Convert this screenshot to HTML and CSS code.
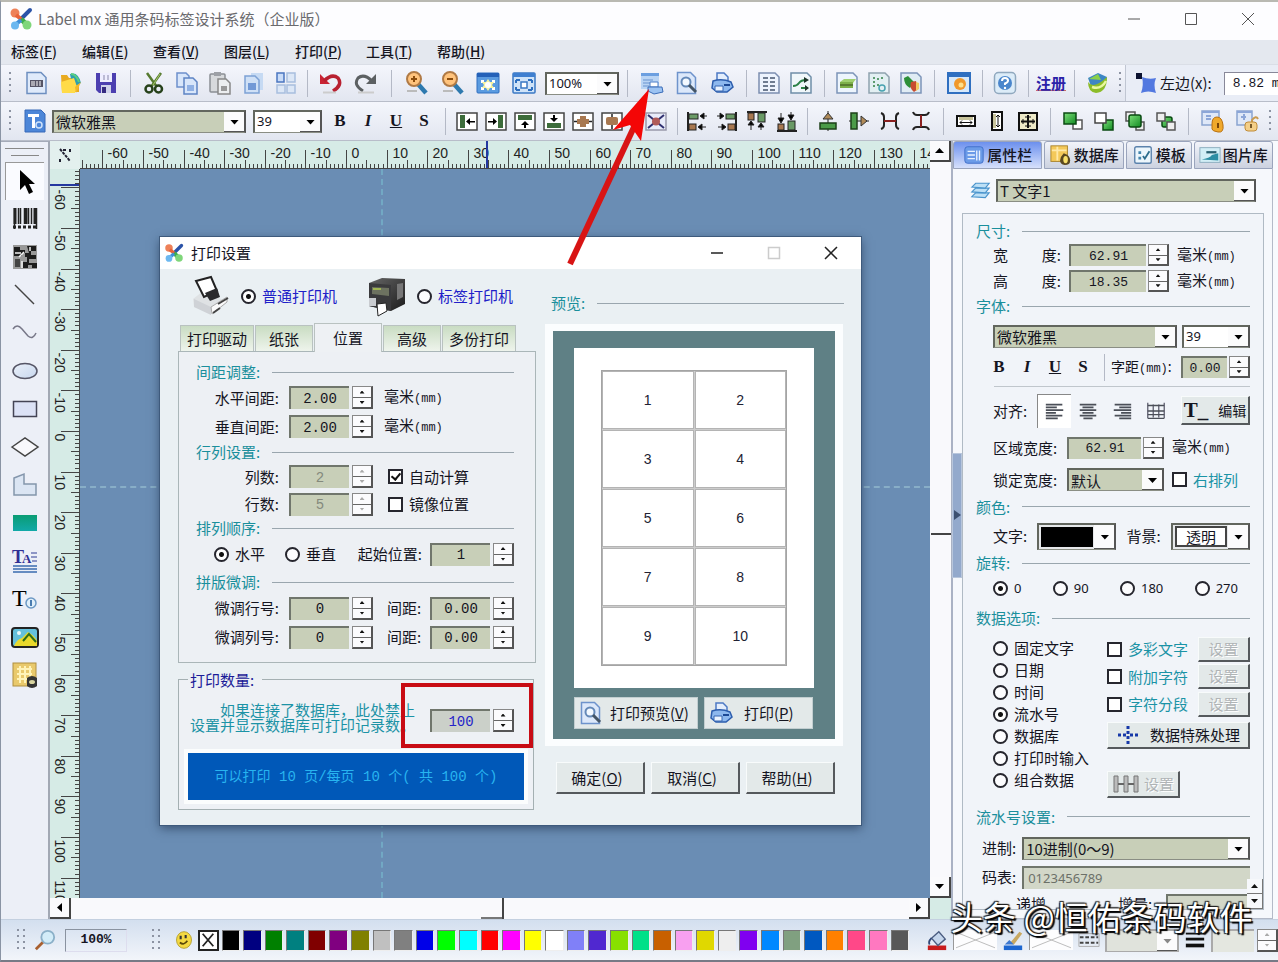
FILE: index.html
```html
<!DOCTYPE html>
<html lang="zh-CN">
<head>
<meta charset="utf-8">
<title>Label mx</title>
<link rel="stylesheet" href="styles.css">
</head>
<body>
<svg class="sprite" aria-hidden="true">
  <defs>
    <linearGradient id="g-blue" x1="0" y1="0" x2="1" y2="1"><stop offset="0" stop-color="#eaf4ff"/><stop offset="1" stop-color="#8fb2e0"/></linearGradient>
    <linearGradient id="g-green" x1="0" y1="0" x2="1" y2="1"><stop offset="0" stop-color="#7ee07a"/><stop offset="1" stop-color="#118a22"/></linearGradient>
    <linearGradient id="g-dark" x1="0" y1="0" x2="1" y2="1"><stop offset="0" stop-color="#666"/><stop offset="1" stop-color="#1c1c1c"/></linearGradient>
    <linearGradient id="g-teal" x1="0" y1="0" x2="0" y2="1"><stop offset="0" stop-color="#0a9c74"/><stop offset="1" stop-color="#12a9a8"/></linearGradient>
  </defs>
  <symbol id="i-logo" viewBox="0 0 24 24"><path d="M21 3 12 12" stroke="#2b53a8" stroke-width="4" stroke-linecap="round"/><path d="M12 12 18 18" stroke="#3fae4c" stroke-width="5"/><circle cx="6" cy="6" r="4.500" fill="#ee8158"/><path d="m7 8 5 4" stroke="#e8633a" stroke-width="4"/><circle cx="18" cy="18" r="4.500" fill="#7fd67a"/><path d="m12 13-6 5" stroke="#3f8fd8" stroke-width="4"/><circle cx="6" cy="18.500" r="4" fill="#6cb8f0"/></symbol>
  <symbol id="i-new" viewBox="0 0 24 24"><path d="M3 1.500h14l5 5V22.500H3z" fill="#dfeafa" stroke="#6d8fc0" stroke-width="1.500"/><rect x="6" y="9" width="13" height="7" fill="#556"/><path d="M8 10v5M10 10v5M13 10v5M16 10v5" stroke="#fff"/></symbol>
  <symbol id="i-open" viewBox="0 0 24 24"><path d="M2 4h6l2 3h10v14H3z" fill="#e9ab20"/><path d="M11 3q8-3 11 9l-6 3-4-7z" fill="#2d9fb0"/><path d="M12 3q5 0 8 8" stroke="#5bd07e" stroke-width="2" fill="none"/><path d="m2 11 13-4 3 9-2 6H3z" fill="#ffdb48"/><path d="m16 16 6-5-5 11z" fill="#f0b92a"/></symbol>
  <symbol id="i-save" viewBox="0 0 24 24"><path d="M2 2h20v20H5l-3-3z" fill="#4c3fb0"/><rect x="6" y="2" width="12" height="9" fill="#eef"/><path d="M10 4v5M14 4v5" stroke="#88a"/><rect x="7" y="14" width="10" height="8" fill="#cfd2ea"/><rect x="8" y="16" width="4" height="6" fill="#352a80"/></symbol>
  <symbol id="i-cut" viewBox="0 0 24 24"><path d="m5 2 10 14M19 2 9 16" stroke="#567a30" stroke-width="2.500"/><path d="m18 3-7 11" stroke="#a7c96a"/><circle cx="7" cy="18" r="3.500" fill="none" stroke="#26411a" stroke-width="2.500"/><circle cx="16.500" cy="18" r="3.500" fill="none" stroke="#26411a" stroke-width="2.500"/></symbol>
  <symbol id="i-copy" viewBox="0 0 24 24"><path d="M2 2h9l3 3v11H2z" fill="#d8e6fa" stroke="#6d90cc" stroke-width="1.500"/><path d="M9 7h9l4 4v12H9z" fill="#d8e6fa" stroke="#5e84c4" stroke-width="1.500"/><rect x="12" y="14" width="7" height="6" fill="#8fb0e4"/></symbol>
  <symbol id="i-paste" viewBox="0 0 24 24"><rect x="2" y="3" width="15" height="18" rx="1" fill="#d7d9dc" stroke="#8b8e94" stroke-width="1.500"/><rect x="6" y="1" width="7" height="4" fill="#9da0a6"/><path d="M10 8h8l4 4v11H10z" fill="#eceef0" stroke="#888" stroke-width="1.500"/><rect x="13" y="15" width="6" height="5" fill="#999"/></symbol>
  <symbol id="i-dup" viewBox="0 0 24 24"><rect x="10" y="2" width="12" height="17" fill="#c6daf3"/><path d="M4 5h10l4 4v13H4z" fill="#cfe0f6" stroke="#7da1d5" stroke-width="1.500"/><path d="M7 19v-7h8v7z" fill="#7299d6"/></symbol>
  <symbol id="i-grid" viewBox="0 0 24 24"><g fill="#dce7f6" stroke="#a8bede" stroke-width="1.500"><rect x="13" y="2" width="8" height="9"/><rect x="3" y="14" width="8" height="8"/><rect x="13" y="14" width="8" height="8"/></g><rect x="3" y="2" width="7" height="9" fill="#c9dcf8" stroke="#4a76c0" stroke-width="1.500"/></symbol>
  <symbol id="i-undo" viewBox="0 0 24 24"><path d="M2 3v10h10z" fill="#c92434"/><path d="M6 10q8-8 14-3 5 7-5 13" fill="none" stroke="#b82030" stroke-width="3.500"/><path d="M5 21.500h13" stroke="#ccc" stroke-width="2"/></symbol>
  <symbol id="i-redo" viewBox="0 0 24 24"><path d="M22 3v10H12z" fill="#5c6062"/><path d="M18 10Q10 2 4 7q-5 7 5 13" fill="none" stroke="#5c6062" stroke-width="3"/><path d="M4 21.500h16" stroke="#ccc" stroke-width="2"/></symbol>
  <symbol id="i-zin" viewBox="0 0 24 24"><path d="m14 13 8 9" stroke="#2d79ae" stroke-width="4.500"/><circle cx="10" cy="8" r="7" fill="#ffc37c" stroke="#b07a45" stroke-width="2"/><path d="M7 8h6M10 5v6" stroke="#8b4c0c" stroke-width="2"/><path d="M3 20h10" stroke="#bbb" stroke-width="2"/></symbol>
  <symbol id="i-zout" viewBox="0 0 24 24"><path d="m14 13 8 9" stroke="#2d79ae" stroke-width="4.500"/><circle cx="10" cy="8" r="7" fill="#ffc37c" stroke="#b07a45" stroke-width="2"/><path d="M7 8h6" stroke="#8b4c0c" stroke-width="2"/><path d="M3 20h10" stroke="#bbb" stroke-width="2"/></symbol>
  <symbol id="i-fit" viewBox="0 0 24 24"><rect x="1" y="2" width="22" height="20" rx="1" fill="#5a9be0" stroke="#2e6fc0"/><path d="M1 2h22v4H1z" fill="#2461b8"/><path d="M5 9h3v3H5zM16 9h3v3h-3zM5 16h3v3H5zM16 16h3v3h-3z" fill="#fff"/><path d="m12 8 2 3h4l-2 3 2 3h-4l-2 3-2-3H6l2-3-2-3h4z" fill="#f6f3a0"/><circle cx="12" cy="14" r="3" fill="#fff"/></symbol>
  <symbol id="i-full" viewBox="0 0 24 24"><rect x="1" y="2" width="22" height="20" rx="1" fill="#cfe3f8" stroke="#3a78c4" stroke-width="1.500"/><path d="M1 2h22v4H1z" fill="#3f7fd0"/><rect x="9" y="11" width="6" height="6" fill="#fff" stroke="#3a78c4" stroke-width="1.500"/><path d="M4 9h4M4 9v3M20 9h-4M20 9v3M4 19h4M4 19v-3M20 19h-4M20 19v-3" stroke="#2d6fc0" stroke-width="2"/></symbol>
  <symbol id="i-pset" viewBox="0 0 24 24"><path d="M1 2h18v16H1z" fill="#b9d4f4"/><path d="M1 2h18v3H1z" fill="#6c9fe0"/><path d="M3 9h10M3 12h7M3 15h6" stroke="#6893cf"/><path d="M10 11h8v5h-8z" fill="#fff" stroke="#4c7ec8"/><path d="M8 16h14l1 5-9 2-6-3z" fill="#9cc3f2" stroke="#3a6cb8"/></symbol>
  <symbol id="i-prev" viewBox="0 0 24 24"><path d="M2.500 1.500h13l5 5v16h-18z" fill="#dce8fa" stroke="#6e93cc" stroke-width="1.500"/><circle cx="11" cy="11" r="4.500" fill="#f3f9ff" stroke="#6489b8" stroke-width="2"/><path d="m14 14 7 7" stroke="#456" stroke-width="3"/></symbol>
  <symbol id="i-print" viewBox="0 0 24 24"><path d="M7 2h7l4 4v6H7z" fill="#e4eefc" stroke="#4d7ac4" stroke-width="1.500"/><path d="M3 10q9-3 18 1l2 5-6 5H7l-5-4z" fill="#8db8ee" stroke="#2c5dad" stroke-width="1.500"/><path d="M5 15h8v5H5z" fill="#eaf3ff" stroke="#3767b2"/><path d="M14 14h6" stroke="#1c4894" stroke-width="2"/></symbol>
  <symbol id="i-list" viewBox="0 0 24 24"><path d="M2 2h16l4 4v16H2z" fill="#edf3fd" stroke="#7c8eb0" stroke-width="1.500"/><path d="M6 7h5M13 7h5M6 11h5M13 11h5M6 15h5M13 15h5M6 19h5M13 19h5" stroke="#46566e" stroke-width="1.500"/></symbol>
  <symbol id="i-flow" viewBox="0 0 24 24"><path d="M2 2h16l4 4v16H2z" fill="#f0f7fa" stroke="#6f8ea8" stroke-width="1.500"/><path d="M4 15q4 0 6-3t7-3M12 17h5" stroke="#2b8246" stroke-width="2" fill="none"/><path d="m15 6 5 3-5 3zM16 14l4 3-4 3z" fill="#1d3428"/></symbol>
  <symbol id="i-doc1" viewBox="0 0 24 24"><path d="M2 2h16l4 4v16H2z" fill="#edf5fd" stroke="#7c94b8" stroke-width="1.500"/><path d="m5 11 4-3h12l-3 4z" fill="#9fd070"/><path d="M5 11h13v6H5z" fill="#7db04a"/><path d="M5 14h13" stroke="#4d6d28" stroke-width="1.500"/></symbol>
  <symbol id="i-doc2" viewBox="0 0 24 24"><path d="M2 2h16l4 4v16H2z" fill="#e2eff2" stroke="#8fa2ae" stroke-width="1.500"/><circle cx="15" cy="17" r="3" fill="none" stroke="#48a2b0" stroke-width="1.500"/><path d="M7 6v12M11 7v2M15 6v4M11 13v3" stroke="#5c9c70" stroke-width="2" stroke-dasharray="2 2"/></symbol>
  <symbol id="i-doc3" viewBox="0 0 24 24"><path d="M2 2h16l4 4v16H2z" fill="#e0ecf4" stroke="#7c94b8" stroke-width="1.500"/><path d="m5 7 4-2 6 6-4 6q-6-3-6-10" fill="#2c8f38"/><path d="m12 11 5-1 2 8-4 3q-5-4-3-10" fill="#c84c30"/><path d="m17 11 3 1v6l-3 2z" fill="#f0cb64"/></symbol>
  <symbol id="i-img" viewBox="0 0 24 24"><rect x="1" y="2" width="22" height="20" fill="#d6e8fa" stroke="#2f6fc0" stroke-width="2"/><path d="M1 2h22v4H1z" fill="#2f6fc0"/><circle cx="13" cy="13" r="6" fill="#f0992c"/><circle cx="14" cy="14" r="2.500" fill="#ffe08a"/></symbol>
  <symbol id="i-help" viewBox="0 0 24 24"><rect x="1.500" y="1.500" width="21" height="21" rx="4" fill="#dcecf8" stroke="#90a8be" stroke-width="1.500"/><circle cx="12" cy="12" r="7" fill="#4a86cc"/><path d="M9 10q0-3 3-3t3 2.500q0 2-3 3v1.500" stroke="#fff" stroke-width="2" fill="none"/><circle cx="12" cy="17" r="1.200" fill="#fff"/></symbol>
  <symbol id="i-site" viewBox="0 0 24 24"><path d="m3 7 10-5 9 4-3 12H7z" fill="#3d86c4"/><path d="m4 8 9-5 3 6" fill="#8ad04a"/><path d="M3 11q5 8 19-5 0 15-11 16-8-1-8-11" fill="#8cbc28"/><path d="M7 16q9 3 14-6" stroke="#e9f7a0" stroke-width="2.500" fill="none"/></symbol>
  <symbol id="i-pos" viewBox="0 0 24 24"><path d="M8 6q7 3 14 1-3 7 0 15-8-3-15 0 3-8 1-16" fill="#5278e0"/><rect x="2" y="2" width="6" height="6" fill="#0c1230"/></symbol>
  <symbol id="i-tfont" viewBox="0 0 24 24"><path d="M2 1h16l4 4v18H2z" fill="#4c86d8" stroke="#3668b8"/><path d="M5 5h11v3h-4v11H9V8H5z" fill="#fff"/><circle cx="16" cy="16" r="3" fill="none" stroke="#cfe2fa" stroke-width="1.500"/></symbol>

  <symbol id="i-al" viewBox="0 0 24 24"><rect x="2" y="4" width="20" height="17" fill="#fff" stroke="#444" stroke-width="1.500"/><rect x="5" y="6" width="5" height="13" fill="#3c6c3a"/><path d="M11 12.500 15 9v7zM15 12h5v1.500h-5z"/></symbol>
  <symbol id="i-ar" viewBox="0 0 24 24"><rect x="2" y="4" width="20" height="17" fill="#fff" stroke="#444" stroke-width="1.500"/><rect x="14" y="6" width="5" height="13" fill="#3c6c3a"/><path d="M13 12.500 9 9v7zM4 12h5v1.500H4z"/></symbol>
  <symbol id="i-at" viewBox="0 0 24 24"><rect x="2" y="4" width="20" height="17" fill="#fff" stroke="#444" stroke-width="1.500"/><rect x="5" y="6" width="14" height="5" fill="#3c6c3a"/><path d="M12 12 8 16h8zM11 16h2v3h-2z"/></symbol>
  <symbol id="i-ab" viewBox="0 0 24 24"><rect x="2" y="4" width="20" height="17" fill="#fff" stroke="#444" stroke-width="1.500"/><rect x="5" y="14" width="14" height="5" fill="#3c6c3a"/><path d="m12 13-4-4h8zM11 6h2v3h-2z"/></symbol>
  <symbol id="i-ah" viewBox="0 0 24 24"><rect x="2" y="4" width="20" height="17" fill="#fff" stroke="#444" stroke-width="1.500"/><path d="M3 12.500h18" stroke="#222" stroke-width="1.500"/><path d="M6 10h3V7h6v3h3v5h-3v3H9v-3H6z" fill="#a87850"/></symbol>
  <symbol id="i-av" viewBox="0 0 24 24"><rect x="2" y="4" width="20" height="17" fill="#fff" stroke="#444" stroke-width="1.500"/><path d="M12 5v15" stroke="#222" stroke-width="1.500"/><rect x="6" y="8" width="12" height="8" rx="2" fill="#a87850"/></symbol>
  <symbol id="i-ac" viewBox="0 0 24 24"><rect x="2" y="4" width="20" height="17" fill="#e9ecfa" stroke="#99a" stroke-width="1.500"/><path d="m4 6 16 13M20 6 4 19" stroke="#303070" stroke-width="2"/><circle cx="12" cy="12.500" r="4" fill="#b05a58"/></symbol>
  <symbol id="i-dl" viewBox="0 0 24 24"><path d="M3 3v19" stroke="#222" stroke-width="2"/><rect x="4" y="5" width="9" height="5" fill="#6a9a66" stroke="#222"/><rect x="4" y="15" width="7" height="6" fill="#a87850" stroke="#222"/><path d="m15 7 4-3v6zM19 7h3M13 18l4-3v6zM17 18h4" stroke="#222"/></symbol>
  <symbol id="i-dr" viewBox="0 0 24 24"><path d="M21 3v19" stroke="#222" stroke-width="2"/><rect x="11" y="5" width="9" height="5" fill="#6a9a66" stroke="#222"/><rect x="13" y="15" width="7" height="6" fill="#a87850" stroke="#222"/><path d="M9 7 5 4v6zM5 7H2M11 18l-4-3v6zM7 18H3" stroke="#222"/></symbol>
  <symbol id="i-dt" viewBox="0 0 24 24"><path d="M2 3h20" stroke="#222" stroke-width="2"/><rect x="3" y="4" width="6" height="7" fill="#a87850" stroke="#222"/><rect x="13" y="4" width="7" height="9" fill="#6a9a66" stroke="#222"/><path d="m6 12-3 4h6zM6 16v5M16 14l-3 4h6zM16 17v4" stroke="#222"/></symbol>
  <symbol id="i-db" viewBox="0 0 24 24"><path d="M2 22h20" stroke="#222" stroke-width="2"/><rect x="3" y="15" width="6" height="6" fill="#a87850" stroke="#222"/><rect x="13" y="12" width="7" height="9" fill="#6a9a66" stroke="#222"/><path d="M6 14 3 9h6zM6 9V4M16 11l-3-5h6zM16 6V3" stroke="#222"/></symbol>
  <symbol id="i-ch" viewBox="0 0 24 24"><path d="M12 2v20" stroke="#222"/><path d="m12 4-5 6h10z" fill="#b08a58" stroke="#333"/><rect x="4" y="14" width="16" height="6" fill="#4b9b48" stroke="#1d4018" stroke-width="1.500"/></symbol>
  <symbol id="i-cv" viewBox="0 0 24 24"><path d="M2 12h20" stroke="#222"/><path d="m20 12-6-5v10z" fill="#b08a58" stroke="#333"/><rect x="4" y="4" width="6" height="16" fill="#4b9b48" stroke="#1d4018" stroke-width="1.500"/></symbol>
  <symbol id="i-sh" viewBox="0 0 24 24"><path d="M3 4q3 1 3 4v8q0 3-3 4M21 4q-3 1-3 4v8q0 3 3 4" stroke="#222" stroke-width="2" fill="none"/><path d="M6 12h12" stroke="#8a2020" stroke-width="2"/></symbol>
  <symbol id="i-sv" viewBox="0 0 24 24"><path d="M4 3q1 3 4 3h8q3 0 4-3M4 21q1-3 4-3h8q3 0 4 3" stroke="#222" stroke-width="2" fill="none"/><path d="M12 6v12" stroke="#8a2020" stroke-width="2"/></symbol>
  <symbol id="i-ww" viewBox="0 0 24 24"><rect x="3" y="7" width="18" height="10" fill="#fff" stroke="#111" stroke-width="2"/><rect x="5" y="8" width="14" height="3" fill="#c8c49c"/><path d="M6 13.500h12M8 11.500l-2 2 2 2M16 11.500l2 2-2 2" stroke="#111" fill="none"/></symbol>
  <symbol id="i-hh" viewBox="0 0 24 24"><rect x="7" y="3" width="10" height="18" fill="#fff" stroke="#111" stroke-width="2"/><rect x="8" y="5" width="3" height="14" fill="#c8c49c"/><path d="M13 6v12M11 8l2-2 2 2M11 16l2 2 2-2" stroke="#111" fill="none"/></symbol>
  <symbol id="i-wh" viewBox="0 0 24 24"><rect x="3" y="4" width="18" height="17" fill="#eeeac8" stroke="#111" stroke-width="2"/><path d="M5 12.500h14M12 6v13" stroke="#111" stroke-width="2"/><path d="M7 10v5M17 10v5M9 8h6M9 17h6" stroke="#111"/></symbol>
  <symbol id="i-f1" viewBox="0 0 24 24"><rect x="12" y="11" width="9" height="9" fill="#fff" stroke="#555" stroke-width="1.500"/><rect x="3" y="4" width="12" height="11" fill="url(#g-green)" stroke="#0a4a12" stroke-width="1.500"/></symbol>
  <symbol id="i-f2" viewBox="0 0 24 24"><rect x="11" y="11" width="10" height="10" fill="url(#g-green)" stroke="#0a4a12" stroke-width="1.500"/><rect x="3" y="4" width="11" height="10" fill="#fff" stroke="#444" stroke-width="1.500"/></symbol>
  <symbol id="i-f3" viewBox="0 0 24 24"><rect x="3" y="3" width="9" height="9" fill="#eee" stroke="#555" stroke-width="1.500"/><rect x="13" y="13" width="8" height="8" fill="#eee" stroke="#555" stroke-width="1.500"/><rect x="6" y="6" width="12" height="12" rx="2" fill="url(#g-green)" stroke="#0a4a12" stroke-width="1.500"/></symbol>
  <symbol id="i-f4" viewBox="0 0 24 24"><rect x="8" y="8" width="10" height="10" rx="2" fill="url(#g-green)" stroke="#0a4a12" stroke-width="1.500"/><rect x="3" y="4" width="8" height="8" fill="#eee" stroke="#555" stroke-width="1.500"/><rect x="13" y="13" width="8" height="8" fill="#eee" stroke="#555" stroke-width="1.500"/></symbol>
  <symbol id="i-lock" viewBox="0 0 24 24"><rect x="1" y="2" width="17" height="14" fill="#dfe8f8" stroke="#8aa4d0" stroke-width="1.500"/><path d="M1 3h17M5 7h5M5 10h5" stroke="#8ca6d8" stroke-width="2"/><path d="M11 15q0-7 5-7t6 8-5 7-6-3z" fill="#f0a92c" stroke="#b87010"/><path d="M17 14v5" stroke="#7a4408" stroke-width="2"/></symbol>
  <symbol id="i-unlock" viewBox="0 0 24 24"><rect x="1" y="2" width="15" height="14" fill="#dfe8f8" stroke="#8aa4d0" stroke-width="1.500"/><path d="M1 3h15M5 8h5M8 5v6" stroke="#8ca6d8" stroke-width="2"/><path d="M16 14v-3q4-5 6-1" stroke="#c89a50" stroke-width="2" fill="none"/><rect x="9" y="13" width="12" height="9" rx="3" fill="#f4cf88" stroke="#c08c38"/><path d="M15 15v4" stroke="#7a5a28" stroke-width="2"/></symbol>

  <symbol id="i-cursor" viewBox="0 0 30 30"><path d="M10 3v20l5-5 4 9 4-2-4-8h6z"/></symbol>
  <symbol id="i-bar" viewBox="0 0 30 30"><path d="M4.500 4v21M8.500 4v16M10.500 4v16M14.500 4v16M18.500 4v16M21.500 4v16M26.500 4v21" stroke="#222" stroke-width="1.500"/><path d="M5 4v16M16 4v16M25 4v16" stroke="#222" stroke-width="3"/><path d="M3 23h24" stroke="#222" stroke-width="3" stroke-dasharray="3 2"/></symbol>
  <symbol id="i-qr" viewBox="0 0 30 30"><rect x="3" y="3" width="24" height="24" fill="#999"/><path d="M4 5h6v3h5v3h-3v3H4zM17 4h9v5h-5v4h5v4h-7v4h8v5h-5v-3h-4v3h-5v-6h4v-5h-2v-4h4z" fill="#1c1c1c"/><path d="M5 17h5v8H5" fill="#444"/><path d="M5 11h6M9 15l5-5M20 5v4M12 19v7" stroke="#f2f2f2" stroke-width="1.500"/></symbol>
  <symbol id="i-line" viewBox="0 0 30 30"><path d="m5 5 19 19" stroke="#444" stroke-width="1.500"/></symbol>
  <symbol id="i-curve" viewBox="0 0 30 30"><path d="M3 11q4-6 9 0l6 7q5 4 8-3" fill="none" stroke="#778" stroke-width="1.500"/></symbol>
  <symbol id="i-ell" viewBox="0 0 30 30"><ellipse cx="15" cy="15" rx="12" ry="7.500" fill="url(#g-blue)" fill-opacity=".4" stroke="#556" stroke-width="1.500"/></symbol>
  <symbol id="i-rect" viewBox="0 0 30 30"><rect x="3.500" y="7.500" width="23" height="15" fill="#dce2f6" stroke="#445" stroke-width="1.500"/></symbol>
  <symbol id="i-dia" viewBox="0 0 30 30"><path d="m2 15 13-9 13 9-13 9z" fill="#f8f8fc" stroke="#444" stroke-width="1.500"/></symbol>
  <symbol id="i-poly" viewBox="0 0 30 30"><path d="m4 8 10-4v10h12v11H4z" fill="#dbe5f3" stroke="#8496ac" stroke-width="1.500"/></symbol>
  <symbol id="i-fill" viewBox="0 0 30 30"><rect x="3" y="7" width="24" height="16" fill="url(#g-teal)"/></symbol>
  <symbol id="i-pic" viewBox="0 0 30 30"><rect x="2" y="6" width="26" height="19" rx="3" fill="#64c0dc" stroke="#222" stroke-width="2"/><path d="M4 24q3-7 8-8l6-6q7 4 9 9v5z" fill="#e9d92c"/><path d="m13 19 6-7 7 8" stroke="#2f6c18" stroke-width="2" fill="none"/><circle cx="9" cy="11" r="2" fill="#e9f8fa"/></symbol>
  <symbol id="i-tab" viewBox="0 0 30 30"><rect x="3" y="3" width="23" height="23" fill="#e9c96c" stroke="#b09040"/><path d="M7 9h15M7 14h15M7 19h15M10 6v17M15 6v17M20 6v17" stroke="#fff3b8" stroke-width="2"/><path d="M17 18q5-4 10 0v8q-5 4-10 0z" fill="#333"/><ellipse cx="22" cy="22" rx="3" ry="2" fill="#d8d4a0"/></symbol>

  <symbol id="i-prop" viewBox="0 0 24 24"><rect x="2" y="3" width="20" height="18" rx="3" fill="#6b9be8" stroke="#3d6cc8"/><path d="M5 8h8M5 12h8M5 16h8M15 7v11M18 7v11" stroke="#e8f2ff" stroke-width="1.500"/></symbol>
  <symbol id="i-data" viewBox="0 0 24 24"><rect x="1" y="2" width="18" height="17" fill="#f4c95a" stroke="#a8822c"/><path d="M2 7h16M8 3v15" stroke="#ffe9a8" stroke-width="2"/><path d="M15 10q7 2 7 8 0 5-6 5-5-1-5-5 0-4 4-8" fill="#5a4820"/><ellipse cx="17" cy="17" rx="2.500" ry="4" fill="#f8e06c"/></symbol>
  <symbol id="i-tpl" viewBox="0 0 24 24"><rect x="3" y="3" width="18" height="18" rx="2" fill="#ecf6fc" stroke="#5b82ac" stroke-width="1.500"/><path d="M7 8h3v3H7zM7 14h3v3H7z" fill="#4284ac"/><path d="m12 13 2 3 5-8" stroke="#2b6c8c" stroke-width="2" fill="none"/></symbol>
  <symbol id="i-gal" viewBox="0 0 24 24"><rect x="1" y="4" width="22" height="16" fill="#d2eef6" stroke="#88aabc"/><path d="M3 17q10-2 11-5l7-2v8z" fill="#2d8ea4"/><path d="M8 9h11" stroke="#2a6070" stroke-width="2.500"/></symbol>
  <symbol id="i-layer" viewBox="0 0 24 24"><g fill="#bde0f6" stroke="#4a94cc" stroke-width="1.200"><path d="m3 19 4-4h14l-4 5z"/><path d="m3 14 4-4h14l-4 5z"/><path d="m3 9 4-4h14l-4 5z"/></g></symbol>
  <symbol id="i-tl" viewBox="0 0 24 24"><path d="M2 5h18M2 8h12M2 11h19M2 14h11M2 17h18M2 20h13" stroke="#4b4f58" stroke-width="2"/></symbol>
  <symbol id="i-tc" viewBox="0 0 24 24"><path d="M3 5h18M6 8h12M3 11h18M6 14h12M3 17h18M7 20h10" stroke="#4b4f58" stroke-width="2"/></symbol>
  <symbol id="i-tr" viewBox="0 0 24 24"><path d="M4 5h18M9 8h13M3 11h19M11 14h11M4 17h18M9 20h13" stroke="#4b4f58" stroke-width="2"/></symbol>
  <symbol id="i-tj" viewBox="0 0 24 24"><path d="M3 3v17M21 3v17M9 5v14M15 5v14" stroke="#667" stroke-width="1.500"/><path d="M3 6h18M3 12h18M3 16h18M3 20h18" stroke="#4b4f58" stroke-width="1.500"/></symbol>
  <symbol id="i-spark" viewBox="0 0 24 24"><path d="M2 12h3M7 12h3M14 12h3M19 12h3M12 3v3M12 8v3M12 13v3M12 18v3" stroke="#1638a8" stroke-width="3"/></symbol>
  <symbol id="i-hh2" viewBox="0 0 28 20"><path d="M2 2h4v16H2zM12 2h4v16h-4zM22 2h4v16h-4z" fill="#bbb" stroke="#777"/><path d="M6 10h6M16 10h6" stroke="#666" stroke-width="2"/></symbol>

  <symbol id="i-mag" viewBox="0 0 24 24"><path d="m2 22 9-9" stroke="#a86030" stroke-width="3"/><circle cx="15" cy="9" r="7" fill="#d2ecf8" stroke="#8bb0c8" stroke-width="2"/></symbol>
  <symbol id="i-smile" viewBox="0 0 24 24"><ellipse cx="12" cy="12" rx="9" ry="10" fill="#f4d942" stroke="#b09a28"/><path d="M8 7v4M14 6v4" stroke="#333" stroke-width="2.500"/><path d="M7 15q5 4 9-2" stroke="#5a4808" stroke-width="2" fill="none"/></symbol>
  <symbol id="i-bucket" viewBox="0 0 24 24"><rect x="2" y="18" width="20" height="5" fill="#c81c1c"/><path d="m6 10 8-7 7 8-8 7z" fill="#c5d6ec" stroke="#4a5c80" stroke-width="1.500"/><path d="M6 10q-4 4-2 7" stroke="#304878" stroke-width="2" fill="none"/></symbol>
  <symbol id="i-pen" viewBox="0 0 24 24"><path d="M2 18h20v5H2z" fill="#1c66d0"/><path d="m8 16 11-13 3 2-9 12z" fill="#c8a860"/><path d="m3 17 5-5 5 5z" fill="#3c78d0"/></symbol>
  <symbol id="i-dash" viewBox="0 0 24 24"><path d="M1 5h22M1 19h22M1 5v14M23 5v14" stroke="#aaa" fill="none"/><path d="M2 9h20M2 15h20" stroke="#444" stroke-width="2" stroke-dasharray="4 2"/></symbol>
  <symbol id="i-thick" viewBox="0 0 24 24"><path d="M2 5h20" stroke="#111" stroke-width="2"/><path d="M2 11h20" stroke="#111" stroke-width="3"/><path d="M2 18h20" stroke="#111" stroke-width="4"/></symbol>
  <symbol id="i-desk" viewBox="0 0 38 42"><path d="M1 24 10 17l25 9-16 11L2 32z" fill="#dfe2e4"/><path d="m2 24 17 8v8L2 32z" fill="#cfd2d6"/><path d="m19 32 16-10v5l-15 12z" fill="#fafafa" stroke="#aaa"/><path d="M4 6 19 2l6 14-13 6z" fill="#fff" stroke="#222" stroke-width="2"/><path d="m13 18 12-5 3 9-10 4z" fill="#2a2a2c"/><path d="m26 29 10-6M21 38l7-5" stroke="#444" stroke-width="2"/></symbol>
  <symbol id="i-thermal" viewBox="0 0 38 42"><path d="m1 8 13-5 23 1v25l-14 7L1 31z" fill="url(#g-dark)"/><path d="m1 8 22 2v26L1 31z" fill="#3a3a3c"/><path d="m4 12 17 1v8L4 19z" fill="#6d7260"/><path d="m29 9 6-1v14l-6 3z" fill="#777"/><path d="M1 23h7v8H1z" fill="#c9ccd0"/><path d="m9 29 9-1 1 8-9 5z" fill="#fff" stroke="#222"/><path d="M5 14h8" stroke="#9fb452" stroke-width="2"/></symbol>
</svg>

<header class="titlebar">
  <svg class="ic"><use href="#i-logo"/></svg>
  <h1 class="app-title">Label mx 通用条码标签设计系统（企业版）</h1>
  <div class="winbtns">
    <button aria-label="最小化"><svg viewBox="0 0 14 14"><path d="M1 7h12"/></svg></button>
    <button aria-label="最大化"><svg viewBox="0 0 14 14"><path d="M1.500 1.500h11v11h-11z"/></svg></button>
    <button aria-label="关闭"><svg viewBox="0 0 14 14"><path d="m1 1 12 12M13 1 1 13"/></svg></button>
  </div>
</header>

<nav class="menubar">
  <button>标签(<u>F</u>)</button><button>编辑(<u>E</u>)</button><button>查看(<u>V</u>)</button><button>图层(<u>L</u>)</button><button>打印(<u>P</u>)</button><button>工具(<u>T</u>)</button><button>帮助(<u>H</u>)</button>
</nav>

<div class="toolbar tb-main">
  <i class="grip"></i>
  <div class="grp w35"><button aria-label="新建"><svg><use href="#i-new"/></svg></button><button aria-label="打开"><svg><use href="#i-open"/></svg></button><button aria-label="保存"><svg><use href="#i-save"/></svg></button></div>
  <i class="sep"></i>
  <div class="grp w33"><button aria-label="剪切"><svg><use href="#i-cut"/></svg></button><button aria-label="复制"><svg><use href="#i-copy"/></svg></button><button aria-label="粘贴"><svg><use href="#i-paste"/></svg></button><button aria-label="重复"><svg><use href="#i-dup"/></svg></button><button aria-label="阵列"><svg><use href="#i-grid"/></svg></button></div>
  <i class="sep slim"></i>
  <div class="grp w36"><button aria-label="撤销"><svg><use href="#i-undo"/></svg></button><button aria-label="重做"><svg><use href="#i-redo"/></svg></button></div>
  <i class="sep"></i>
  <div class="grp w36"><button aria-label="放大"><svg><use href="#i-zin"/></svg></button><button aria-label="缩小"><svg><use href="#i-zout"/></svg></button><button aria-label="适合标签"><svg><use href="#i-fit"/></svg></button><button aria-label="适合窗口"><svg><use href="#i-full"/></svg></button></div>
  <div class="combo white zoom-combo"><select aria-label="缩放"><option>100%</option></select></div>
  <i class="sep"></i>
  <div class="grp w35"><button aria-label="打印设置"><svg><use href="#i-pset"/></svg></button><button aria-label="打印预览"><svg><use href="#i-prev"/></svg></button><button aria-label="打印"><svg><use href="#i-print"/></svg></button></div>
  <i class="sep"></i>
  <div class="grp w32"><button aria-label="列表"><svg><use href="#i-list"/></svg></button><button aria-label="流程"><svg><use href="#i-flow"/></svg></button></div>
  <i class="sep"></i>
  <div class="grp w32"><button aria-label="导出"><svg><use href="#i-doc1"/></svg></button><button aria-label="网格"><svg><use href="#i-doc2"/></svg></button><button aria-label="颜色"><svg><use href="#i-doc3"/></svg></button></div>
  <i class="sep"></i>
  <div class="grp w36"><button aria-label="图片"><svg><use href="#i-img"/></svg></button></div>
  <i class="sep slim"></i>
  <div class="grp w36"><button aria-label="帮助"><svg><use href="#i-help"/></svg></button></div>
  <i class="sep slim"></i>
  <div class="grp w36"><button class="reg">注册</button></div>
  <i class="sep slim"></i>
  <div class="grp w36"><button aria-label="网站"><svg><use href="#i-site"/></svg></button></div>
  <i class="grip tight"></i>
  <div class="posbar"><svg class="ic"><use href="#i-pos"/></svg><label for="posx">左边(x):</label><input id="posx" value="8.82 mm"></div>
</div>

<div class="toolbar tb-format">
  <i class="grip"></i>
  <div class="grp w33"><button aria-label="字体工具"><svg><use href="#i-tfont"/></svg></button></div>
  <div class="combo font-combo"><select aria-label="字体"><option>微软雅黑</option></select></div>
  <div class="combo white size-combo"><select aria-label="字号"><option>39</option></select></div>
  <div class="bius"><button><b>B</b></button><button><i>I</i></button><button><u>U</u></button><button><b>S</b></button></div>
  <i class="sep"></i>
  <div class="grp w29"><button aria-label="左对齐"><svg><use href="#i-al"/></svg></button><button aria-label="右对齐"><svg><use href="#i-ar"/></svg></button><button aria-label="顶对齐"><svg><use href="#i-at"/></svg></button><button aria-label="底对齐"><svg><use href="#i-ab"/></svg></button><button aria-label="水平居中"><svg><use href="#i-ah"/></svg></button><button aria-label="垂直居中"><svg><use href="#i-av"/></svg></button></div>
  <i class="sep clear"></i>
  <div class="grp w32"><button aria-label="页面居中"><svg><use href="#i-ac"/></svg></button></div>
  <i class="sep slim"></i>
  <div class="grp w30"><button aria-label="靠左"><svg><use href="#i-dl"/></svg></button><button aria-label="靠右"><svg><use href="#i-dr"/></svg></button><button aria-label="靠上"><svg><use href="#i-dt"/></svg></button><button aria-label="靠下"><svg><use href="#i-db"/></svg></button></div>
  <i class="sep slim"></i>
  <div class="grp w31"><button aria-label="中心横向"><svg><use href="#i-ch"/></svg></button><button aria-label="中心纵向"><svg><use href="#i-cv"/></svg></button><button aria-label="等距横向"><svg><use href="#i-sh"/></svg></button><button aria-label="等距纵向"><svg><use href="#i-sv"/></svg></button></div>
  <i class="sep"></i>
  <div class="grp w31"><button aria-label="等宽"><svg><use href="#i-ww"/></svg></button><button aria-label="等高"><svg><use href="#i-hh"/></svg></button><button aria-label="等大"><svg><use href="#i-wh"/></svg></button></div>
  <i class="sep"></i>
  <div class="grp w31"><button aria-label="最前"><svg><use href="#i-f1"/></svg></button><button aria-label="最后"><svg><use href="#i-f2"/></svg></button><button aria-label="前移"><svg><use href="#i-f3"/></svg></button><button aria-label="后移"><svg><use href="#i-f4"/></svg></button></div>
  <i class="sep"></i>
  <div class="grp w35"><button aria-label="锁定"><svg><use href="#i-lock"/></svg></button><button aria-label="解锁"><svg><use href="#i-unlock"/></svg></button></div>
  <i class="grip tight"></i>
</div>

<main class="main">
  <aside class="toolbox">
    <i class="tool-grip"></i>
    <button class="on" aria-label="选择"><svg><use href="#i-cursor"/></svg></button>
    <button aria-label="条码"><svg><use href="#i-bar"/></svg></button>
    <button aria-label="二维码"><svg><use href="#i-qr"/></svg></button>
    <button aria-label="直线"><svg><use href="#i-line"/></svg></button>
    <button aria-label="曲线"><svg><use href="#i-curve"/></svg></button>
    <button aria-label="椭圆"><svg><use href="#i-ell"/></svg></button>
    <button aria-label="矩形"><svg><use href="#i-rect"/></svg></button>
    <button aria-label="菱形"><svg><use href="#i-dia"/></svg></button>
    <button aria-label="多边形"><svg><use href="#i-poly"/></svg></button>
    <button aria-label="填充"><svg><use href="#i-fill"/></svg></button>
    <button aria-label="段落"><svg viewBox="0 0 30 30"><text x="2" y="17" class="t-icon t-navy">T</text><text x="12" y="17" class="t-icon-s t-navy">A</text><path d="M21 7h6M21 11h6M22 15h5" stroke="#2f3c94"/><path d="M3 20h24M3 23h24M3 26h24" stroke="#3a6cb0" stroke-width="1.500"/></svg></button>
    <button aria-label="文字"><svg viewBox="0 0 30 30"><text x="2" y="22" class="t-icon-l">T</text><circle cx="21" cy="19" r="5" fill="#e0effa" stroke="#6c98c4" stroke-width="1.500"/><path d="M21 16v6" stroke="#4a7cb0" stroke-width="2"/></svg></button>
    <button aria-label="图像"><svg><use href="#i-pic"/></svg></button>
    <button aria-label="表格"><svg><use href="#i-tab"/></svg></button>
  </aside>

  <section class="workspace">
    <div class="corner"><svg viewBox="0 0 30 28"><path d="m10 8 10 12M20 8v4M10 18v3M13 9h4" stroke="#223" stroke-width="2" stroke-dasharray="3 1"/></svg></div>
    <svg class="ruler-h" id="rulerH"></svg>
    <svg class="ruler-v" id="rulerV"></svg>
    <div class="canvas"><i class="guide-v"></i><i class="guide-h"></i></div>
    <div class="scroll-v"><button class="sb up" aria-label="向上"></button><i class="thumb"></i><button class="sb down" aria-label="向下"></button></div>
    <div class="scroll-h"><button class="sb left" aria-label="向左"></button><i class="thumb"></i><button class="sb right" aria-label="向右"></button></div>

    <section class="dialog" role="dialog" aria-label="打印设置">
      <header class="dlg-title"><svg class="ic"><use href="#i-logo"/></svg><h2>打印设置</h2>
        <div class="winbtns">
          <button aria-label="最小化"><svg viewBox="0 0 14 14"><path d="M1 7h12"/></svg></button>
          <button class="off" aria-label="最大化"><svg viewBox="0 0 14 14"><path d="M1.500 1.500h11v11h-11z"/></svg></button>
          <button aria-label="关闭"><svg viewBox="0 0 14 14"><path d="m1 1 12 12M13 1 1 13"/></svg></button>
        </div>
      </header>
      <div class="dlg-body">
        <div class="dlg-left">
          <div class="kinds">
            <svg class="pr"><use href="#i-desk"/></svg><label class="ck"><input type="radio" name="kind" checked>普通打印机</label>
            <svg class="pr"><use href="#i-thermal"/></svg><label class="ck"><input type="radio" name="kind">标签打印机</label>
          </div>
          <div class="tabs"><button class="long">打印驱动</button><button>纸张</button><button class="on">位置</button><button>高级</button><button class="long">多份打印</button></div>
          <div class="tabpage">
            <h3 class="hd">间距调整:</h3>
            <div class="row"><label for="hs">水平间距:</label><span class="spin"><input id="hs" value="2.00"><span class="ud"><button aria-label="增"></button><button aria-label="减"></button></span></span><span class="unit">毫米<small>(mm)</small></span></div>
            <div class="row"><label for="vs">垂直间距:</label><span class="spin"><input id="vs" value="2.00"><span class="ud"><button aria-label="增"></button><button aria-label="减"></button></span></span><span class="unit">毫米<small>(mm)</small></span></div>
            <h3 class="hd">行列设置:</h3>
            <div class="row"><label for="cn">列数:</label><span class="spin dim"><input id="cn" value="2" disabled><span class="ud"><button aria-label="增" disabled></button><button aria-label="减" disabled></button></span></span><label class="ck"><input type="checkbox" checked>自动计算</label></div>
            <div class="row"><label for="rn">行数:</label><span class="spin dim"><input id="rn" value="5" disabled><span class="ud"><button aria-label="增" disabled></button><button aria-label="减" disabled></button></span></span><label class="ck"><input type="checkbox">镜像位置</label></div>
            <h3 class="hd">排列顺序:</h3>
            <div class="row order"><label class="ck"><input type="radio" name="ord" checked>水平</label><label class="ck"><input type="radio" name="ord">垂直</label><label class="lab" for="st">起始位置:</label><span class="spin"><input id="st" value="1"><span class="ud"><button aria-label="增"></button><button aria-label="减"></button></span></span></div>
            <h3 class="hd">拼版微调:</h3>
            <div class="row"><label for="fr">微调行号:</label><span class="spin"><input id="fr" value="0"><span class="ud"><button aria-label="增"></button><button aria-label="减"></button></span></span><label class="gaplab" for="fg">间距:</label><span class="spin"><input id="fg" value="0.00"><span class="ud"><button aria-label="增"></button><button aria-label="减"></button></span></span></div>
            <div class="row"><label for="fc">微调列号:</label><span class="spin"><input id="fc" value="0"><span class="ud"><button aria-label="增"></button><button aria-label="减"></button></span></span><label class="gaplab" for="fh">间距:</label><span class="spin"><input id="fh" value="0.00"><span class="ud"><button aria-label="增"></button><button aria-label="减"></button></span></span></div>
          </div>
          <fieldset class="qty">
            <legend>打印数量:</legend>
            <div class="qty-row"><p>如果连接了数据库，此处禁止<br>设置并显示数据库可打印记录数。</p><span class="spin"><input aria-label="打印数量" class="focus" value="100"><span class="ud"><button aria-label="增"></button><button aria-label="减"></button></span></span></div>
            <div class="banner"><span>可以打印 10 页/每页 10 个( 共 100 个)</span></div>
            <i class="redbox"></i>
          </fieldset>
        </div>
        <div class="dlg-right">
          <h3 class="hd">预览:</h3>
          <div class="pv-frame"><div class="pv">
            <div class="page"><div class="cells"><span>1</span><span>2</span><span>3</span><span>4</span><span>5</span><span>6</span><span>7</span><span>8</span><span>9</span><span>10</span></div></div>
            <div class="pv-btns"><button class="btn"><svg class="ic"><use href="#i-prev"/></svg><span>打印预览(<u>V</u>)</span></button><button class="btn"><svg class="ic"><use href="#i-print"/></svg><span>打印(<u>P</u>)</span></button></div>
          </div></div>
          <div class="dlg-btns"><button class="btn">确定(<u>O</u>)</button><button class="btn">取消(<u>C</u>)</button><button class="btn">帮助(<u>H</u>)</button></div>
        </div>
      </div>
    </section>
  </section>

  <aside class="side">
    <i class="splitter"></i>
    <div class="side-tabs"><button class="on"><svg class="ic"><use href="#i-prop"/></svg>属性栏</button><button><svg class="ic"><use href="#i-data"/></svg>数据库</button><button><svg class="ic"><use href="#i-tpl"/></svg>模板</button><button><svg class="ic"><use href="#i-gal"/></svg>图片库</button></div>
    <div class="side-page">
      <div class="object"><svg class="ic"><use href="#i-layer"/></svg><div class="combo"><select aria-label="对象"><option>T 文字1</option></select></div></div>
      <div class="props">
        <h3 class="hd">尺寸:</h3>
        <div class="row"><label class="wide" for="w"><span>宽</span><span>度:</span></label><span class="spin"><input id="w" value="62.91"><span class="ud"><button aria-label="增"></button><button aria-label="减"></button></span></span><span class="unit">毫米<small>(mm)</small></span></div>
        <div class="row"><label class="wide" for="h"><span>高</span><span>度:</span></label><span class="spin"><input id="h" value="18.35"><span class="ud"><button aria-label="增"></button><button aria-label="减"></button></span></span><span class="unit">毫米<small>(mm)</small></span></div>
        <h3 class="hd">字体:</h3>
        <div class="row fonts"><div class="combo grow"><select aria-label="文字字体"><option>微软雅黑</option></select></div><div class="combo white num"><select aria-label="文字字号"><option>39</option></select></div></div>
        <div class="row"><div class="bius"><button><b>B</b></button><button><i>I</i></button><button><u>U</u></button><button><b>S</b></button></div><i class="sep"></i><label class="kern" for="kn">字距<small>(mm)</small>:</label><span class="spin tiny"><input id="kn" value="0.00"><span class="ud"><button aria-label="增"></button><button aria-label="减"></button></span></span></div>
        <hr>
        <div class="row align"><span>对齐:</span><button class="on" aria-label="左"><svg><use href="#i-tl"/></svg></button><button aria-label="中"><svg><use href="#i-tc"/></svg></button><button aria-label="右"><svg><use href="#i-tr"/></svg></button><button aria-label="两端"><svg><use href="#i-tj"/></svg></button><button class="btn edit"><span class="bigt">T_</span>编辑</button></div>
        <div class="row region"><label for="rw">区域宽度:</label><span class="spin"><input id="rw" value="62.91"><span class="ud"><button aria-label="增"></button><button aria-label="减"></button></span></span><span class="unit">毫米<small>(mm)</small></span></div>
        <div class="row region"><label for="lw">锁定宽度:</label><div class="combo lockw"><select id="lw"><option>默认</option></select></div><label class="ck teal"><input type="checkbox">右排列</label></div>
        <h3 class="hd">颜色:</h3>
        <div class="row colors"><span>文字:</span><button class="combo clr" aria-label="文字颜色"><i class="black"></i></button><span>背景:</span><button class="combo clr" aria-label="背景颜色"><span class="trans">透明</span></button></div>
        <h3 class="hd">旋转:</h3>
        <div class="row rot"><label class="ck"><input type="radio" name="rot" checked>0</label><label class="ck"><input type="radio" name="rot">90</label><label class="ck"><input type="radio" name="rot">180</label><label class="ck"><input type="radio" name="rot">270</label></div>
        <h3 class="hd">数据选项:</h3>
        <div class="dataopts">
          <div class="radios"><label class="ck"><input type="radio" name="d">固定文字</label><label class="ck"><input type="radio" name="d">日期</label><label class="ck"><input type="radio" name="d">时间</label><label class="ck"><input type="radio" name="d" checked>流水号</label><label class="ck"><input type="radio" name="d">数据库</label><label class="ck"><input type="radio" name="d">打印时输入</label><label class="ck"><input type="radio" name="d">组合数据</label></div>
          <div class="extras">
            <label class="ck teal"><input type="checkbox">多彩文字</label><button class="btn" disabled>设置</button>
            <label class="ck teal"><input type="checkbox">附加字符</label><button class="btn" disabled>设置</button>
            <label class="ck teal"><input type="checkbox">字符分段</label><button class="btn" disabled>设置</button>
            <button class="btn special"><svg class="ic"><use href="#i-spark"/></svg><span>数据特殊处理</span></button>
            <button class="btn combine" disabled><svg><use href="#i-hh2"/></svg>设置</button>
          </div>
        </div>
        <h3 class="hd">流水号设置:</h3>
        <div class="row serial"><label for="rd">进制:</label><div class="combo grow"><select id="rd"><option>10进制(0～9)</option></select></div></div>
        <div class="row serial"><label for="ct">码表:</label><input id="ct" class="code" value="0123456789" disabled></div>
        <div class="row serial cut"><label for="inc">递增</label><label for="amt">增量:</label><input id="amt" class="code"></div>
        <div class="mini-scroll"><button aria-label="上翻"></button><button aria-label="下翻"></button></div>
      </div>
    </div>
    <div class="mark">头条 @恒佑条码软件</div>
  </aside>
</main>

<footer class="status">
  <i class="grip dbl"></i><svg class="ic"><use href="#i-mag"/></svg><output class="zoomval">100%</output><i class="grip dbl far"></i><svg class="ic smile"><use href="#i-smile"/></svg>
  <div class="palette" id="palette"><button class="none" aria-label="无颜色"><svg viewBox="0 0 18 20"><path d="m3 3 12 14M15 3 3 17"/></svg></button></div>
  <div class="strokes">
    <svg class="ic"><use href="#i-bucket"/></svg><svg class="xbox" viewBox="0 0 44 20"><path d="m2 2 40 16M42 2 2 18"/></svg><svg class="ic"><use href="#i-pen"/></svg><svg class="xbox" viewBox="0 0 44 20"><path d="m2 2 40 16M42 2 2 18"/></svg><svg class="ic"><use href="#i-dash"/></svg>
    <div class="combo"><select aria-label="线型" disabled><option></option></select></div><svg class="ic"><use href="#i-thick"/></svg>
    <span class="spin dim"><input aria-label="线宽" disabled><span class="ud"><button aria-label="增" disabled></button><button aria-label="减" disabled></button></span></span>
  </div>
</footer>

<svg class="pointer" viewBox="0 0 90 180" aria-hidden="true"><path d="M7 176 71 39" stroke="#d81414" stroke-width="6"/><path d="M86 1 50 42l17-5 11 16z" fill="#f40606"/></svg>
<script src="script.js"></script>
</body>
</html>
```
FILE: styles.css
```css
* { box-sizing: border-box; }
body {
  margin: 0; height: 100vh; display: flex; flex-direction: column; overflow: hidden; position: relative;
  font: 15px/20px "Noto Sans CJK SC", sans-serif; color: #15151f; background: #eef2f8;
  border-top: 2px solid #b9b9b2; border-bottom: 2px solid #777a86; border-left: 1px solid #8a94a4;
}
button, input, select { font: inherit; color: inherit; margin: 0; padding: 0; }
button { background: none; border: 0; display: flex; align-items: center; justify-content: center; white-space: nowrap; }
h1, h2, h3, p { margin: 0; font-weight: 400; font-size: 15px; }
label, span { white-space: nowrap; }
i { font-style: normal; }
small { font: 12px/20px "Liberation Mono", monospace; }
.sprite { position: absolute; width: 0; height: 0; }
.ic { width: 24px; height: 24px; flex: none; }
.t-icon { font: bold 18px "Liberation Serif", serif; }
.t-icon-s { font: bold 13px "Liberation Serif", serif; }
.t-icon-l { font: 24px "Liberation Serif", serif; }
.t-navy { fill: #2f2f94; }

.titlebar { height: 38px; flex: none; background: #fdfdff; display: flex; align-items: center; padding: 0 2px 4px 8px; gap: 5px; }
.app-title { color: #6a6a6e; font-size: 15px; }
.winbtns { margin-left: auto; display: flex; }
.winbtns button { width: 57px; height: 32px; }
.winbtns svg { width: 14px; height: 14px; fill: none; stroke: #555; stroke-width: 1; }
.menubar { height: 25px; flex: none; display: flex; background: #e4e8ef; border-bottom: 1px solid #dadee6; font-size: 14px; padding-bottom: 3px; }
.menubar button { width: 71px; padding-left: 10px; justify-content: flex-start; font-weight: 500; }

.toolbar { height: 37px; flex: none; display: flex; align-items: center; background: linear-gradient(#f4f6fc, #e2e6f0); border-bottom: 1px solid #b8bdc9; overflow: hidden; }
.toolbar > * { flex: none; }
.tb-format { height: 39px; }
.grip { width: 17px; height: 26px; background: radial-gradient(circle, #8c93a2 1px, transparent 1px) 6px 0 / 6px 6px repeat-y; }
.grip.tight { width: 10px; background-position: 2px 0; }
.grip.dbl { background: radial-gradient(circle, #8c93a2 1px, transparent 1px) 0 0 / 6px 6px; }
.sep { width: 14px; height: 27px; background: linear-gradient(#b4b9c6, #b4b9c6) center / 1px 100% no-repeat; flex: none; }
.sep.slim { width: 10px; }
.sep.clear { background: none; }
.grp { display: flex; }
.grp button { height: 32px; }
.grp svg { width: 24px; height: 24px; }
.w29 button { width: 29px; } .w30 button { width: 30px; } .w31 button { width: 31px; } .w32 button { width: 32px; }
.w33 button { width: 33px; } .w35 button { width: 35px; } .w36 button { width: 36px; }
.grp .reg { color: #2a22a8; font-size: 15px; font-weight: 700; text-decoration: underline #d06a6a; }
.posbar { display: flex; align-items: center; gap: 2px; border-left: 1px solid #c0c6d2; height: 36px; padding-left: 8px; background: #e9edf6; }
.posbar input { width: 80px; height: 23px; margin-left: 10px; border: 1px solid #889; border-width: 1px 0 0 1px; background: #fff; padding-left: 8px; font: 13px "Liberation Mono", monospace; }

.combo { position: relative; height: 23px; background: #c8cfb8; border: 2px solid #62665e; border-right-color: #555; border-bottom: 1px solid #8a8e84; }
.combo select { appearance: none; width: 100%; height: 100%; border: 0; background: transparent; padding: 0 22px 0 2px; line-height: 19px; display: block; }
.combo::before { content: ""; position: absolute; right: 0; top: 0; bottom: 0; width: 20px; background: #fbfbfc; border-bottom: 1px solid #555; pointer-events: none; }
.combo::after { content: ""; position: absolute; right: 5px; top: calc(50% - 2px); width: 9px; height: 5px; background: #000; clip-path: polygon(0 0, 100% 0, 50% 100%); pointer-events: none; }
.combo.white { background: #fff; }
.combo.white select { font: 13px/19px "Noto Sans", sans-serif; }
.zoom-combo { width: 74px; margin: 0 1px 0 3px; }
.font-combo { width: 194px; margin: 0 7px 0 1px; }
.size-combo { width: 69px; margin-right: 4px; }
.bius { display: flex; }
.bius button { width: 28px; height: 24px; font: bold 17px "Liberation Serif", serif; }
.bius i { font-style: italic; }

.main { flex: 1; min-height: 0; display: flex; }
.toolbox { width: 49px; flex: none; background: #eceff7; border-top: 1px solid #a4aab8; border-right: 2px solid #a2a8b4; padding: 6px 4px; display: flex; flex-direction: column; }
.tool-grip { height: 14px; border-top: 1px solid #888; background: linear-gradient(#888, #888) 6px 6px / 28px 1px no-repeat; flex: none; }
.toolbox button { height: 38px; flex: none; }
.toolbox .on { background: #fafbff; border: 1px solid #999; border-width: 1px 0 0 1px; }
.toolbox svg { width: 30px; height: 30px; }

.workspace { flex: 1; min-width: 0; position: relative; display: grid; grid-template: 28px 1fr 21px / 30px 1fr 21px; background: #d6ebe6; }
.corner { background: #e3f0ee; }
.corner svg { width: 30px; height: 28px; }
.ruler-h, .ruler-v { width: 100%; height: 100%; overflow: hidden; }
.ruler-h { grid-area: 1 / 2; border-bottom: 1px solid #444; }
.ruler-v { grid-area: 2 / 1; border-right: 1px solid #444; }
.ruler-h text, .ruler-v text { font: 14px "Liberation Sans", sans-serif; fill: #222; }
.canvas { grid-area: 2 / 2; background: #6a8db4; position: relative; }
.guide-v { position: absolute; left: 35.4%; top: 0; bottom: 0; border-left: 2px dashed #76b4cc; opacity: .7; }
.guide-h { position: absolute; top: 43.5%; left: 0; right: 0; border-top: 2px dashed #9cc4d4; opacity: .6; }
.scroll-v { grid-area: 1 / 3 / 3 / 4; display: flex; flex-direction: column; background: #f9f9fc; }
.scroll-h { grid-area: 3 / 1 / 4 / 3; display: flex; background: #f9f9fc; }
.sb { width: 21px; height: 21px; flex: none; background: #fafafc; border: 1px solid #444; border-width: 0 2px 2px 0; }
.sb::before { content: ""; width: 9px; height: 5px; background: #000; }
.up::before { clip-path: polygon(50% 0, 100% 100%, 0 100%); }
.down::before { clip-path: polygon(0 0, 100% 0, 50% 100%); }
.left::before, .right::before { width: 5px; height: 9px; }
.left::before { clip-path: polygon(0 50%, 100% 0, 100% 100%); }
.right::before { clip-path: polygon(0 0, 100% 50%, 0 100%); }
.scroll-v .thumb { flex: 1; background: linear-gradient(#444, #444) right 52% / 20px 2px no-repeat; }
.scroll-h .thumb { flex: 1; background: linear-gradient(#444, #444) 51.5% 0 / 2px 100% no-repeat, linear-gradient(#777, #777) 50.3% 100% / 22px 2px no-repeat; }

.hd { display: flex; align-items: center; gap: 12px; color: #1a8f9c; font-size: 15px; line-height: 20px; }
.hd::after { content: ""; flex: 1; height: 1px; background: #9aa6ae; }
.row { display: flex; align-items: center; }
.ck { display: flex; align-items: center; gap: 6px; }
.ck input { appearance: none; width: 15px; height: 15px; flex: none; border: 2px solid #26262e; background: #fff; }
.ck input[type="radio"] { border-radius: 50%; background: #fcfcfe; }
.ck input[type="radio"]:checked { background: radial-gradient(circle, #111 2px, #fff 3px); }
.ck input[type="checkbox"]:checked { position: relative; }
.ck input[type="checkbox"]:checked::after { content: ""; position: absolute; left: 3px; top: 0; width: 4px; height: 7px; border: solid #111; border-width: 0 2px 2px 0; transform: rotate(40deg); }
.teal { color: #1a93a6; }
.spin { display: flex; gap: 3px; height: 23px; }
.spin input { width: 60px; height: 23px; border: 2px solid #70766c; border-width: 2px 0 0 2px; background: #c8cfb8; text-align: center; font: 14px "Liberation Mono", monospace; border-radius: 0; }
.ud { width: 21px; display: grid; grid-template-rows: 1fr 1fr; border: 1px solid #888; border-width: 1px 2px 2px 1px; border-right-color: #555; border-bottom-color: #555; background: #fbfbfd; }
.ud button + button { border-top: 1px solid #666; }
.ud button::before { content: ""; width: 5px; height: 3px; background: #111; clip-path: polygon(50% 0, 100% 100%, 0 100%); }
.ud button + button::before { clip-path: polygon(0 0, 100% 0, 50% 100%); }
.dim input { color: #84897c; }
.dim .ud button::before { background: #aaa; }
.btn { background: #e3e9e9; border: 1px solid #f8fbfb; border-right: 2px solid #55595c; border-bottom: 2px solid #55595c; height: 32px; }
.btn:disabled { color: #b0b4b6; text-shadow: 1px 1px #fff; }

.dialog { position: absolute; left: 110px; top: 96px; width: 701px; background: #eaf0f3; box-shadow: 0 0 0 1px #3e5a7c, 0 3px 10px rgba(20, 35, 60, .6); }
.dlg-title { height: 32px; background: #fff; display: flex; align-items: center; gap: 7px; padding: 0 2px 0 4px; }
.dlg-title svg { stroke: #222; }
.dlg-title .ic { width: 20px; height: 20px; stroke: none; }
.dlg-title .off svg { stroke: #ccc; }
.dlg-title .winbtns svg { stroke-width: 1.500; }
.dlg-body { display: flex; gap: 9px; padding: 0 17px 15px 18px; }
.dlg-left { width: 358px; flex: none; }
.kinds { height: 54px; display: flex; align-items: center; padding-left: 14px; color: #2020c8; }
.pr { width: 38px; height: 42px; margin-right: 11px; }
.kinds .ck + .pr { margin-left: 31px; }
.tabs { display: flex; align-items: flex-end; padding-left: 2px; gap: 1px; }
.tabs button { height: 26px; padding: 0 13px; background: linear-gradient(#c9dcc2, #eef4ec); border: 1px solid #b9c2c0; border-bottom: 0; }
.tabs .long { padding: 0 6px; }
.tabs .on { height: 29px; padding: 0 18px; background: #eef1f4; margin-bottom: -1px; position: relative; }
.tabpage { border: 1px solid #aab6b8; background: #edf0f4; padding: 9px 21px 10px 17px; display: grid; grid-template-rows: 22px 29px 29px 22px 27px 28px 20px 32px 24px 28px 30px; }
.tabpage .row > label:first-child { width: 83px; text-align: right; margin-right: 10px; }
.tabpage .unit { margin-left: 11px; }
.tabpage .spin + .ck { margin-left: 15px; }
.tabpage .gaplab { margin-left: 14px; width: 36px; margin-right: 7px; }
.tabpage .order .ck:first-child { width: auto; margin: 0 20px 0 18px; }
.order .lab { margin: 0 8px 0 auto; }
.qty { position: relative; margin: 7px 2px 0 0; padding: 0 9px 9px; border: 1px solid #a4b0b2; background: #eef1f5; min-width: 0; }
.qty legend { color: #1c1c98; padding: 0 8px 0 2px; margin: 0; line-height: 20px; height: 19px; }
.qty-row { display: flex; align-items: flex-start; height: 64px; padding: 13px 10px 0 2px; }
.qty p { color: #1c93a6; line-height: 15px; text-indent: 30px; width: 0; white-space: nowrap; }
.qty .spin { margin: 7px 0 0 auto; }
.qty .focus { color: #2424c8; background: #cbd0c9; }
.banner { height: 47px; background: #0058b8; color: #28b4f0; display: flex; align-items: center; justify-content: center; font: 14px/20px "Liberation Mono", "Noto Sans CJK SC", monospace; outline: 4px solid #fbfdfd; }
.banner span { white-space: pre; }
.redbox { position: absolute; right: 0; top: -6px; width: 132px; height: 65px; border: 4px solid #c80c14; }
.dlg-right { flex: 1; padding-top: 24px; }
.dlg-right .hd { margin-left: 6px; height: 20px; }
.pv-frame { background: #fbfdfe; padding: 7px 8px; margin: 11px 1px 16px 0; }
.pv { background: #5f8085; padding: 17px 21px 10px; }
.page { background: #fff; height: 340px; padding: 22px 27px; }
.cells { height: 296px; display: grid; grid-template-columns: 1fr 1fr; grid-auto-rows: 1fr; gap: 1px; background: #ccc; border: 1px solid #a4a4a4; }
.cells span { background: #fff; border: 1px solid #b4b4b4; display: flex; align-items: center; justify-content: center; font: 14px "Liberation Sans", sans-serif; color: #223; }
.pv-btns { display: flex; gap: 6px; margin-top: 9px; }
.pv-btns .btn { border: 1px solid #c2ced0; justify-content: flex-start; padding: 0 4px; gap: 7px; width: 124px; }
.pv-btns .btn + .btn { width: 109px; gap: 11px; }
.dlg-btns { display: flex; gap: 6px; padding-left: 11px; }
.dlg-btns .btn { width: 89px; padding-right: 6px; }

.side { width: 327px; flex: none; position: relative; display: flex; flex-direction: column; background: linear-gradient(90deg, #e6ebf4, #f8fafe); border-left: 2px solid #aab2c4; }
.side-tabs { height: 28px; display: flex; gap: 2px; padding-right: 5px; }
.side-tabs button { flex: 78; gap: 2px; background: linear-gradient(#f2f4fa, #ccd2e0); border: 1px solid #9aa4bc; border-radius: 3px 3px 0 0; font-weight: 500; }
.side-tabs .ic { width: 22px; height: 22px; }
.side-tabs .on { flex: 88; background: linear-gradient(#6c90ee, #d6e0fb); }
.side-tabs button:nth-child(3) { flex: 64; }
.side-page { flex: 1; min-height: 0; margin: 0 5px 0 0; background: #f6f8fc; border: 1px solid #b4bac8; border-top: 0; border-left: 0; padding: 9px 8px 8px 9px; display: flex; flex-direction: column; overflow: hidden; }
.object { display: flex; align-items: center; gap: 4px; padding: 0 8px 0 7px; margin-bottom: 11px; }
.object .ic { width: 23px; }
.object .combo { flex: 1; }
.props { flex: 1; min-height: 0; overflow: hidden; position: relative; border: 1px solid #b0bac4; background: #f1f4f9; padding: 6px 13px 0; display: grid; grid-template-columns: minmax(0, 1fr); grid-template-rows: 22px 26px 26px 24px 36px 26px 12px 37px 37px 27px 27px 32px 22px 28px 32px 163px 39px 24px 34px 30px; }
.props > .row { padding-left: 17px; }
.props hr { width: calc(100% - 18px); margin: auto 0 auto 18px; border: 0; border-top: 1px solid #c0c6cc; }
.props .wide { width: 68px; display: flex; justify-content: space-between; margin-right: 8px; }
.props .spin input { width: 77px; font-size: 13px; height: 22px; }
.props .spin { gap: 2px; height: 22px; }
.props .unit { margin-left: 8px; }
.fonts { gap: 5px; }
.combo.grow { flex: 1; }
.combo.num { width: 68px; }
.row .bius { margin-left: -8px; }
.row .kern { margin-right: auto; font-size: 14px; }
.props .tiny input { width: 46px; }
.align button { width: 34px; height: 34px; }
.align svg { width: 22px; height: 22px; }
.align span:first-child { margin-right: 10px; }
.align .on { border: 1px solid #888; border-width: 1px 0 0 1px; background: #fff; }
.align .edit { width: 69px; height: 29px; margin-left: auto; font-size: 14px; }
.bigt { font: bold 21px/24px "Liberation Serif", serif; margin-right: 4px; }
.region label:first-child { width: 74px; }
.lockw { width: 97px; }
.region .ck { margin-left: 8px; }
.props .region .spin input { width: 74px; }
.colors { justify-content: space-between; }
.clr { width: 79px; height: 27px; justify-content: flex-start; background: #e6e8ea; padding: 1px 2px; }
.clr .black { width: 52px; height: 20px; background: #000; }
.trans { width: 52px; height: 21px; border: 2px solid #444; background: #fff; line-height: 17px; text-align: center; }
.rot { font: 13px "Noto Sans", sans-serif; justify-content: space-between; padding-right: 12px; }
.dataopts { display: grid; grid-template-columns: 114px 1fr; padding: 3px 0 0 17px; }
.radios .ck { height: 22px; }
.extras { display: grid; grid-template-columns: 1fr 52px; grid-template-rows: 28px 27px 28px 34px 34px; align-items: center; align-content: start; margin-top: -2px; }
.extras .btn { height: 25px; }
.extras .special { grid-column: 1 / 3; height: 27px; gap: 10px; }
.extras .combine { height: 27px; width: 73px; margin-top: 30px; }
.combine svg { width: 28px; height: 20px; margin-right: 4px; }
.props .serial { padding-left: 6px; gap: 6px; }
.serial .code { flex: 1; min-width: 0; height: 23px; border: 2px solid #70766c; border-width: 2px 0 0 2px; background: #d2d7c8; color: #6c7068; padding-left: 4px; font: 13px "Noto Sans", sans-serif; }
.props .cut { align-items: flex-start; padding-left: 40px; gap: 14px; }
.cut label + label { margin-left: 58px; }
.mini-scroll { position: absolute; right: 0; bottom: 0; width: 16px; }
.mini-scroll button { width: 16px; height: 15px; background: #f6f8fb; border: 1px solid #777; border-width: 0 1px 1px 0; }
.mini-scroll button::before { content: ""; width: 7px; height: 4px; background: #111; clip-path: polygon(50% 0, 100% 100%, 0 100%); }
.mini-scroll button + button::before { clip-path: polygon(0 0, 100% 0, 50% 100%); }
.splitter { position: absolute; left: -1px; top: 312px; width: 10px; height: 125px; background: #93a9cc; border: 1px solid #b8c6dc; }
.splitter::after { content: ""; position: absolute; left: 1px; top: 56px; border: 5px solid transparent; border-left: 7px solid #3c5070; }
.mark { position: absolute; left: -3px; bottom: -19px; font-size: 33px; line-height: 44px; color: #fff; white-space: nowrap; text-shadow: 2px 2px 1px #000, -1px -1px 1px #222, 1px -1px 1px #222, -1px 1px 1px #222; z-index: 2; }

.status { height: 41px; flex: none; display: flex; align-items: center; background: linear-gradient(#d3dfef, #f2f5fa); border-top: 1px solid #c4d0e0; }
.zoomval { width: 62px; height: 23px; margin-left: 9px; border: 1px solid #8a93a0; border-color: #8a93a0 #dde #dde #8a93a0; text-align: center; font: 13px/20px "Liberation Mono", monospace; font-weight: 700; }
.status .ic { width: 22px; height: 22px; }
.status .grip { width: 10px; margin: 0 9px 0 14px; }
.status .grip.far { margin: 0 14px 0 23px; }
.status .smile { width: 20px; margin-right: 4px; }
.palette { flex: 1; min-width: 0; display: flex; gap: 3px; }
.palette button { flex: 1; height: 21px; border: 1px solid #777; border-color: #777 #eee #eee #777; }
.palette .none { border: 2px solid #222; background: #fff; }
.palette svg { width: 16px; height: 18px; stroke: #222; stroke-width: 2; }
.strokes { width: 369px; flex: none; display: flex; align-items: center; gap: 5px; padding-left: 17px; }
.xbox { width: 44px; height: 20px; background: #fdfdfe; stroke: #bbb; border-left: 1px solid #999; flex: none; }
.strokes .combo { width: 74px; background: #e0e3dc; border-color: #aaa; }
.strokes .combo::after { background: #888; }
.strokes .spin { flex: 1; }
.strokes .spin input { flex: 1; width: 0; background: #e4e7e0; border-color: #aaa; }

.pointer { position: absolute; left: 562px; top: 86px; width: 90px; height: 180px; fill: none; pointer-events: none; }
```
FILE: script.js
```js
const NS = "http://www.w3.org/2000/svg";
const STEP = 40.6; // width of ten millimetres on the rulers

function add(parent, name, attrs, text) {
  const el = document.createElementNS(NS, name);
  for (const k in attrs) el.setAttribute(k, attrs[k]);
  if (text !== undefined) el.textContent = text;
  parent.appendChild(el);
}

function drawRuler(svg, zero, marker, vertical) {
  const box = svg.getBoundingClientRect();
  const length = vertical ? box.height : box.width;
  const depth = vertical ? box.width : box.height;
  let d = "";
  for (let mm = -70; mm < 160; mm++) {
    const at = Math.round(zero + mm * STEP / 10) + 0.5;
    if (at < 0 || at > length) continue;
    const size = mm % 10 === 0 ? 19 : mm % 5 === 0 ? 9 : 5;
    d += vertical ? `M${depth} ${at}h${-size}` : `M${at} ${depth}v${-size}`;
    if (mm % 10 === 0) {
      const attrs = vertical ? { transform: `translate(5 ${at + 2}) rotate(90)` } : { x: at + 5, y: 17 };
      add(svg, "text", attrs, mm);
    }
  }
  add(svg, "path", { d, stroke: "#444", fill: "none" });
  const line = vertical ? `M0 ${marker}h${depth}` : `M${marker} 0v${depth}`;
  add(svg, "path", { d: line, stroke: "#2438a0", "stroke-width": 2 });
}

drawRuler(document.getElementById("rulerH"), 266, 407, false);
drawRuler(document.getElementById("rulerV"), 262, 16, true);

const colors = ["#000", "#000080", "#008000", "#008080", "#800000", "#800080", "#808000", "#c0c0c0", "#808080",
  "#0000e8", "#00ff00", "#00ffff", "#ff0000", "#ff00ff", "#ffff00", "#ffffff", "#8080f8", "#5028d0", "#88e000",
  "#00e088", "#c86000", "#f8a0f0", "#e0d800", "#eeeeee", "#8000f0", "#0088ff", "#80a080", "#0058c0", "#ff8000",
  "#ff4888", "#ff78c0", "#585858"];
const palette = document.getElementById("palette");
for (const c of colors) {
  const b = document.createElement("button");
  b.style.background = c;
  b.setAttribute("aria-label", c);
  palette.appendChild(b);
}
```
